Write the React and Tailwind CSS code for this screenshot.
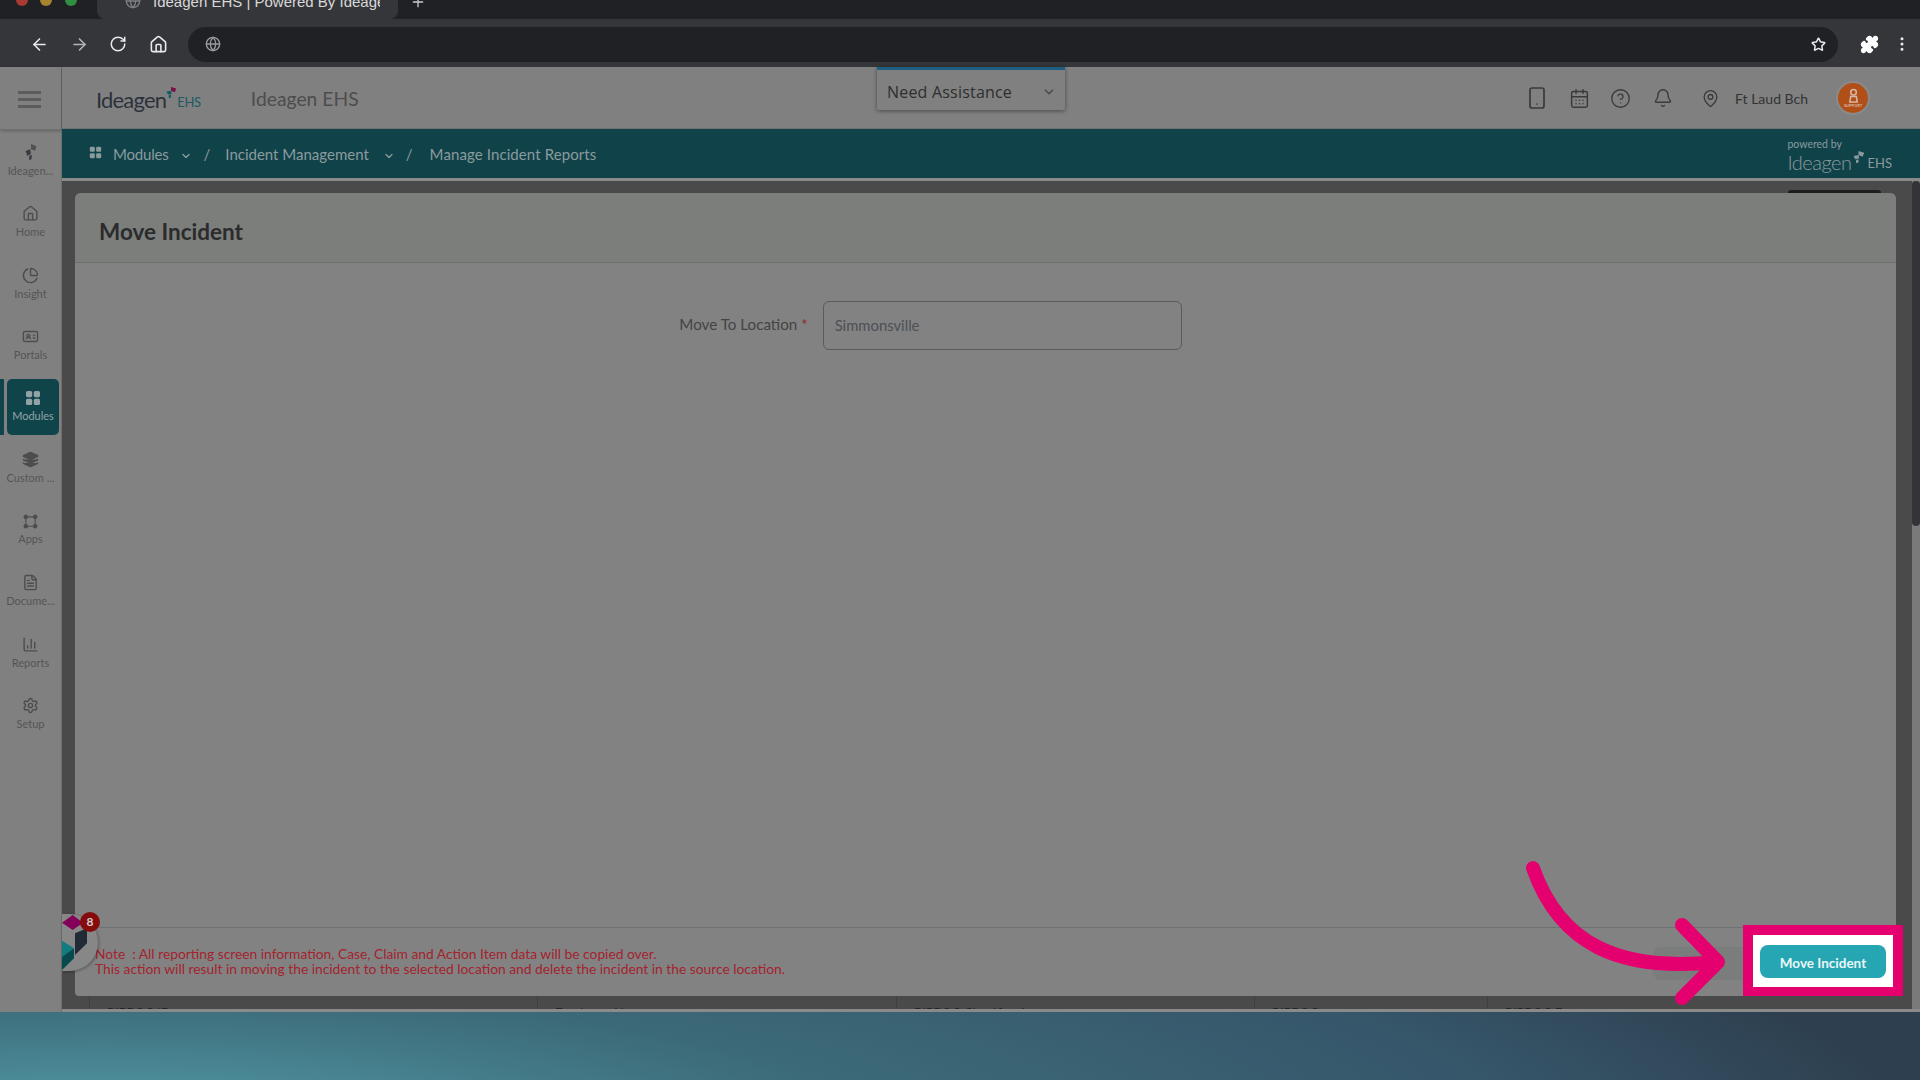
import React from 'react';
import {
    ArrowLeft, ArrowRight, RotateCw, House, Globe, Star, Puzzle, EllipsisVertical, Plus,
    Smartphone, CalendarDays, CircleHelp, Bell, MapPin, ChevronDown,
    ChartPie, IdCard, Layers, FileText, ChartColumn, Settings,
} from 'lucide-react';

const GridIcon = ({ className }) => (
    <svg viewBox="0 0 16 16" className={className} fill="currentColor">
        <rect x="1" y="1" width="6.2" height="6.2" rx="1.6" />
        <rect x="8.8" y="1" width="6.2" height="6.2" rx="1.6" />
        <rect x="1" y="8.8" width="6.2" height="6.2" rx="1.6" />
        <rect x="8.8" y="8.8" width="6.2" height="6.2" rx="1.6" />
    </svg>
);

const AppsIcon = ({ className }) => (
    <svg viewBox="0 0 16 16" className={className} fill="currentColor" stroke="currentColor">
        <circle cx="3" cy="3" r="2" />
        <circle cx="13" cy="3" r="2" />
        <circle cx="3" cy="13" r="2" />
        <circle cx="13" cy="13" r="2" />
        <path d="M3 3H13V13H3Z" fill="none" strokeWidth="1.2" />
    </svg>
);

const IdeagenMark = ({ className, top = '#4f4f55', bottom = '#3a3a40' }) => (
    <svg viewBox="0 0 16 20" className={className}>
        <path d="M8 1l6 2.5-1.5 5L8 7z" fill={top} />
        <path d="M2 9l5-2 1 5-4 2.5z" fill={bottom} />
        <path d="M6 14.5l3-1.5-.5 5L6 19z" fill={bottom} />
    </svg>
);

const Logo = () => (
    <div className="flex items-end mt-[4px] -ml-[1px]">
        <span className="text-[22px] leading-[26px] tracking-[-0.8px] text-[#2b323c]">Ideagen</span>
        <svg viewBox="0 0 16 16" className="w-[12px] h-[14px] mb-[13px] -ml-px">
            <path d="M8 0l7 2-2 5-5-2z" fill="#7a1048" />
            <path d="M2 6l6-1 1 4-5 1z" fill="#0d5c63" />
            <path d="M5 11l3-1v4l-3 1z" fill="#0d5c63" />
        </svg>
        <span className="text-[13px] leading-[20px] tracking-[-0.3px] mb-[1px] text-[#1d5a63]">EHS</span>
    </div>
);

const navItems = [
    { label: 'Ideagen...', icon: <IdeagenMark className="w-[16px] h-[18px]" /> },
    { label: 'Home', icon: <House className="w-[17px] h-[17px]" /> },
    { label: 'Insight', icon: <ChartPie className="w-[17px] h-[17px]" /> },
    { label: 'Portals', icon: <IdCard className="w-[17px] h-[17px]" /> },
    { label: 'Modules', icon: <GridIcon className="w-[16px] h-[16px]" />, active: true },
    { label: 'Custom ...', icon: <Layers className="w-[17px] h-[17px] fill-current" /> },
    { label: 'Apps', icon: <AppsIcon className="w-[15px] h-[15px]" /> },
    { label: 'Docume...', icon: <FileText className="w-[17px] h-[17px]" /> },
    { label: 'Reports', icon: <ChartColumn className="w-[17px] h-[17px]" /> },
    { label: 'Setup', icon: <Settings className="w-[17px] h-[17px]" /> },
];

const Sidebar = () => (
    <div className="w-[62px] shrink-0 flex flex-col bg-[#808080] border-r border-[#6f6f6f]">
        <div className="h-[63px] flex items-center justify-center pr-[2px] pt-[2px] border-b border-[#6f6f6f] shadow-[1px_1px_3px_rgba(0,0,0,0.25)]">
            <div className="w-[23px] flex flex-col gap-[4px]">
                <div className="h-[3px] bg-[#5c5c5c]" />
                <div className="h-[3px] bg-[#5c5c5c]" />
                <div className="h-[3px] bg-[#5c5c5c]" />
            </div>
        </div>
        {navItems.map((item) =>
            item.active ? (
                <div key={item.label} className="h-[61.5px] flex items-center">
                    <div className="w-[4px] h-[56px] bg-[#10444b]" />
                    <div className="ml-[3px] w-[52px] h-[56px] rounded-[5px] bg-[#10444b] text-[#93a3a5] flex flex-col items-center justify-center gap-[3px]">
                        {item.icon}
                        <span className="text-[11px] leading-[14px]">{item.label}</span>
                    </div>
                </div>
            ) : (
                <div key={item.label} className="h-[61.5px] text-[#4d4d4d] flex flex-col items-center justify-center gap-[3px]">
                    {item.icon}
                    <span className="text-[11px] leading-[14px] text-[#555555]">{item.label}</span>
                </div>
            )
        )}
    </div>
);

const Header = () => (
    <div className="relative h-[62px] shrink-0 bg-[#808080] flex items-center pl-[35px] pr-[52px] border-b border-[#6f7272]">
        <Logo />
        <span className="ml-[50px] mt-[4px] text-[19.3px] text-[#4d4d4d]">Ideagen EHS</span>
        <div className="absolute left-[815px] top-0 w-[188px] h-[43px] bg-[#808080] border-t-[3px] border-[#1d5f82] rounded-b-[2px] shadow-[0_1px_4px_rgba(0,0,0,0.45)] flex items-center justify-between pt-[3px] pl-[10px] pr-[9px]">
            <span className="font-['Open_Sans',sans-serif] text-[16px] font-medium tracking-[0.2px] text-[#2e2e2e]">Need Assistance</span>
            <ChevronDown className="w-[14px] h-[14px] text-[#4d4d4d]" strokeWidth={3} />
        </div>
        <div className="ml-auto flex items-center mt-[1px] text-[#3a3a3a]">
            <Smartphone className="w-[24px] h-[26px]" strokeWidth={1.7} />
            <CalendarDays className="ml-[20px] w-[21px] h-[21px]" strokeWidth={1.7} />
            <CircleHelp className="ml-[20px] w-[21px] h-[21px]" strokeWidth={1.5} />
            <Bell className="ml-[22px] w-[20px] h-[22px]" strokeWidth={1.7} />
            <MapPin className="ml-[28px] w-[19px] h-[21px]" strokeWidth={1.7} />
            <span className="ml-[15px] text-[14px] text-[#333333]">Ft Laud Bch</span>
            <div className="ml-[30px] w-[30px] h-[30px] rounded-full bg-[#b04f17] ring-2 ring-[#8a8a8a] flex flex-col items-center justify-center text-[#d8b9a5]">
                <svg viewBox="0 0 16 16" className="w-[15px] h-[15px]" fill="none" stroke="currentColor" strokeWidth="1.6">
                    <circle cx="8" cy="4.5" r="3" />
                    <path d="M4 15l1-6h6l1 6z" />
                </svg>
                <span className="text-[4px] leading-[5px] font-bold">SUPPORT</span>
            </div>
        </div>
    </div>
);

const Breadcrumb = () => (
    <div className="h-[49px] shrink-0 bg-[#10424a] flex items-center pl-[27px] pr-[28px] text-[15px] text-[#8b9b9d]">
        <GridIcon className="w-[13px] h-[13px] mb-[2px]" />
        <span className="ml-[11px] mt-[2px] tracking-[-0.2px]">Modules</span>
        <ChevronDown className="ml-[11px] w-[12px] h-[12px] mt-[4px]" strokeWidth={2.5} />
        <span className="ml-[12px] mt-[2px]">/</span>
        <span className="ml-[15px] mt-[2px]">Incident Management</span>
        <ChevronDown className="ml-[14px] w-[12px] h-[12px] mt-[4px]" strokeWidth={2.5} />
        <span className="ml-[11px] mt-[2px]">/</span>
        <span className="ml-[17px] mt-[2px] tracking-[0.1px]">Manage Incident Reports</span>
        <div className="ml-auto flex flex-col mt-[4px]">
            <span className="text-[10.5px] leading-[12px]">powered by</span>
            <div className="flex items-end">
                <span className="text-[20px] leading-[24px] font-light tracking-[-0.5px]">Ideagen</span>
                <svg viewBox="0 0 16 16" className="w-[13px] h-[13px] mb-[10px]">
                    <path d="M8 0l7 2-2 5-5-2zM2 6l6-1 1 4-5 1zM5 11l3-1v4l-3 1z" fill="currentColor" />
                </svg>
                <span className="text-[13px] leading-[18px] ml-[3px] mb-[2px]">EHS</span>
            </div>
        </div>
    </div>
);

const tableCols = [
    { w: 'w-[448px]', label: 'RIPPOC ID' },
    { w: 'w-[359px]', label: 'Employee Name' },
    { w: 'w-[358px]', label: 'RIPPOC Classification' },
    { w: 'w-[233px]', label: 'RIPPOC' },
    { w: 'w-[394px]', label: 'RIPPOC Date' },
];

const MoveCard = () => (
    <div className="h-[803px] shrink-0 relative flex flex-col bg-[#828282] rounded-t-[6px] rounded-b-[4px]">
        <div className="absolute -top-[3px] right-[15px] w-[93px] h-[3px] rounded-t-[4px] bg-[#1e1e1e]" />
        <div className="h-[70px] shrink-0 flex items-center pl-[24px] pt-[8px] bg-[#7c7e7c] rounded-t-[6px] border-b border-[#6e7070]">
            <h1 className="text-[22.5px] font-bold text-[#2b2b2b]">Move Incident</h1>
        </div>
        <div className="flex-1 flex justify-center pt-[38px] pr-[55px]">
            <div className="flex items-center h-[49px] ml-[-55px]">
                <label className="text-[15.2px] mb-[2px] text-[#444444]">
                    Move To Location <span className="text-[#8f2630]">*</span>
                </label>
                <div className="ml-[15px] w-[359px] h-[49px] rounded-[6px] border border-[#5a5a5a] flex items-center pl-[11px] pb-[1px] text-[14.8px] text-[#4c5056]">
                    Simmonsville
                </div>
            </div>
        </div>
        <div className="h-[69px] shrink-0 flex items-center pl-[20px] border-t border-[#6c7171]">
            <div className="text-[13.8px] leading-[15px] text-[#a4232e] mt-[-2px]">
                <p>Note &nbsp;: All reporting screen information, Case, Claim and Action Item data will be copied over.</p>
                <p>This action will result in moving the incident to the selected location and delete the incident in the source location.</p>
            </div>
            <div className="ml-auto mr-[136px] mt-[3px] w-[107px] h-[33px] rounded-[8px] bg-[#7b7d7d]" />
        </div>
    </div>
);

const Main = () => (
    <div className="flex-1 flex overflow-hidden border-t-[3px] border-b-[3px] border-[#8a8a8a]">
        <div className="flex-1 bg-[#4a4a4a] pl-[13px] pr-[16px] pt-[12px] overflow-hidden">
            <MoveCard />
            <div className="flex pl-[14px] overflow-hidden h-[13px]">
                {tableCols.map((col) => (
                    <div key={col.label} className={`${col.w} shrink-0 h-[13px] border-l border-[#3f3f3f] pl-[17px] pt-[9px] text-[13px] leading-[16px] text-[#222222] overflow-hidden`}>
                        {col.label}
                    </div>
                ))}
            </div>
        </div>
        <div className="w-[8px] shrink-0 bg-[#7a7a7a]">
            <div className="h-[345px] rounded-full bg-[#333438]" />
        </div>
    </div>
);

export default function App() {
    return (
        <div className="relative w-[1920px] h-[1080px] overflow-hidden flex flex-col font-['Lato',sans-serif] bg-[#202124]">
            {/* tab strip, cut off at the top of the capture */}
            <div className="h-[19px] shrink-0 bg-[#202124] flex overflow-hidden">
                <div className="w-[97px] shrink-0 relative">
                    <div className="absolute left-[16px] -top-[6px] w-[12px] h-[12px] rounded-full bg-[#a83a33]" />
                    <div className="absolute left-[40px] -top-[6px] w-[12px] h-[12px] rounded-full bg-[#a8832e]" />
                    <div className="absolute left-[65px] -top-[6px] w-[12px] h-[12px] rounded-full bg-[#2f8f3f]" />
                </div>
                <div className="w-[301px] shrink-0 bg-[#35363a] flex items-start -mt-[7px] pl-[28px] pr-[18px] font-['Liberation_Sans',sans-serif] text-[15px] leading-[18px] text-[#d8d8d8] overflow-hidden rounded-b-[8px]">
                    <Globe className="w-[16px] h-[16px] shrink-0 text-[#7d7e82] mr-[12px]" />
                    <span className="whitespace-nowrap overflow-hidden">Ideagen EHS | Powered By Ideagen</span>
                </div>
                <div className="ml-[12px] -mt-[6px] text-[#c9cacc]">
                    <Plus className="w-[16px] h-[16px]" />
                </div>
            </div>
            {/* browser toolbar */}
            <div className="h-[48px] shrink-0 bg-[#35363a] flex items-center pl-[30px] pr-[7px]">
                <ArrowLeft className="w-[19px] h-[19px] mt-[2px] text-[#e8eaed]" />
                <ArrowRight className="ml-[21px] w-[19px] h-[19px] mt-[2px] text-[#b4b5b8]" />
                <RotateCw className="ml-[20px] w-[18px] h-[18px] mt-[2px] text-[#e8eaed]" />
                <House className="ml-[22px] w-[19px] h-[19px] mt-[2px] text-[#e8eaed]" />
                <div className="ml-[20px] w-[1650px] h-[35px] rounded-full bg-[#202124] flex items-center pl-[17px] pr-[12px] mt-[2px]">
                    <Globe className="w-[16px] h-[16px] text-[#9a9b9e]" />
                    <Star className="ml-auto w-[15px] h-[15px] text-[#e8eaed]" strokeWidth={2.4} />
                </div>
                <Puzzle className="ml-[22px] w-[19px] h-[19px] mt-[2px] text-white fill-white" />
                <EllipsisVertical className="ml-[14px] w-[18px] h-[18px] mt-[2px] text-[#e8eaed]" />
            </div>
            {/* app */}
            <div className="h-[945px] shrink-0 flex">
                <Sidebar />
                <div className="flex-1 flex flex-col min-w-0">
                    <Header />
                    <Breadcrumb />
                    <Main />
                </div>
            </div>
            {/* desktop wallpaper under the window */}
            <div className="flex-1 bg-[radial-gradient(ellipse_1800px_300px_at_100px_110px,#529ba8_0%,#3c6a78_42%,#36566a_78%,#2e4050_100%)]" />

            {/* floating help widget */}
            <div className="absolute left-[62px] top-[914px] w-[36px] h-[57px] rounded-r-full bg-[#878787] shadow-[1px_1px_3px_rgba(0,0,0,0.3)]">
                <svg viewBox="0 0 36 57" className="w-[36px] h-[57px]">
                    <path d="M0 8.7L10.7 1 21 8.7 10.7 16Z" fill="#84005a" />
                    <path d="M13 19.3L25 14.3V29.3L13 41Z" fill="#222a36" />
                    <path d="M0 26.7L12 34.3 0 42.7Z" fill="#0f7c82" />
                    <path d="M12 34.3V44.3L0 56V42.7Z" fill="#064a4e" />
                </svg>
            </div>
            <div className="absolute left-[80px] top-[912px] w-[20px] h-[20px] rounded-full bg-[#860c0c] flex items-center justify-center text-[12px] font-bold text-[#cfcfcf]">8</div>

            {/* tutorial highlight over the action button */}
            <div className="absolute left-[1743px] top-[925px] w-[160px] h-[71px] border-[10px] border-b-[9px] border-[#e5006f] bg-white flex items-center justify-center">
                <button className="w-[126px] h-[33px] pt-[5px] rounded-[8px] bg-[#26a5b3] text-[13.5px] font-bold text-[#eaf7f8]">Move Incident</button>
            </div>
            <svg className="absolute left-0 top-0 w-[1920px] h-[1080px] pointer-events-none" viewBox="0 0 1920 1080" fill="none">
                <path d="M1533 868C1560 945 1620 972 1716 962M1682 925L1718 962 1682 998" stroke="#e5006f" strokeWidth="14" strokeLinecap="round" strokeLinejoin="round" />
            </svg>
        </div>
    );
}
